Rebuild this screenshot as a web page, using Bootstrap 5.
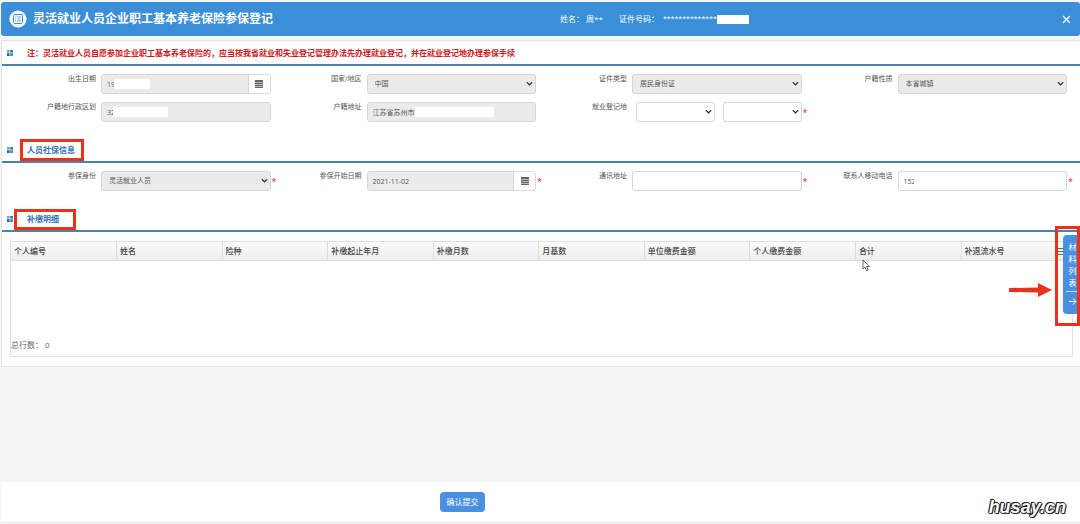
<!DOCTYPE html>
<html lang="zh-CN">
<head>
<meta charset="utf-8">
<meta name="viewport" content="width=device-width, initial-scale=1">
<title>灵活就业人员企业职工基本养老保险参保登记</title>
<link href="https://cdn.jsdelivr.net/npm/bootstrap@5.3.0/dist/css/bootstrap.min.css" rel="stylesheet">
<style>
body{background:#f5f5f5;font-family:"Open Sans","Noto Sans CJK SC",sans-serif;font-size:7px;line-height:10px;color:#555}
.page-shell{padding:2px 0 1px 1px}
.top-bar{background:#3a8fd8;height:34px;border-radius:3px;color:#fff;padding:0 9px 0 8px;font-size:8px;gap:6px}
.top-bar h1{font-size:12px;line-height:18px;font-weight:700}
.who{left:559px}
.stars{font-size:7px}
.redact{width:32px;height:9px;background:#fff}
.close-x{background:none;border:0;padding:0;line-height:0;color:#fff}
.panel{background:#fff;margin-top:4px;border:1px solid #e6e6e6;border-top-color:#f0dede;border-right:0;padding-bottom:9px}
.sec-title{height:25px;border-bottom:2px solid #4b81ae;padding-left:5px;gap:14px}
.sec-title h2{font-size:8px;line-height:12px;font-weight:700;color:#3272b8}
.sec-title .notice{color:#d01820}
.mark-box{border:3px solid #e8321a;pointer-events:none}
.mark-a{inset:-5px -9px -5px -7px}
.mark-b{inset:-4px -17px -5px -13px}
.fields{padding:8px 13px 0 3px;row-gap:8px}
.fields label{width:91px;text-align:right;flex:none;margin-right:5px}
.ctl{min-width:0}
.ctl .form-control,.ctl .form-select{height:20px;min-height:0;font-size:7px;line-height:10px;color:#555;border:1px solid #d6d6d6;border-radius:3px;padding:4px 5px;box-shadow:none;background-color:#fff}
.ctl .form-select{padding:4px 16px 4px 7px;background-image:url("data:image/svg+xml,%3Csvg xmlns='http://www.w3.org/2000/svg' viewBox='0 0 8 6'%3E%3Cpath d='M1 1l3 3 3-3' fill='none' stroke='%23333' stroke-width='1.5'/%3E%3C/svg%3E");background-size:7px 6px;background-position:right 2px center}
.ctl .locked{background-color:#ebebeb}
.ctl .input-group>.form-control{border-radius:3px 0 0 3px}
.cal-btn{width:23px;height:20px;padding:0;border:1px solid #ddd;background:#fff;border-radius:0 3px 3px 0;line-height:0}
.req{left:100%;top:6px;margin-left:1px;color:#e02030;font-size:9px}
.veil{background:#fff;height:10px;top:5px;z-index:6}
.grid-wrap{margin:9px 7px 0 8px;border:1px solid #e0e0e0;height:116px}
.grid-wrap table{table-layout:fixed;font-size:8px;line-height:12px;color:#444}
.grid-wrap th{height:18px;padding:2px 3px;font-weight:500;border-right:1px solid #ddd;border-bottom:1px solid #ddd;background:linear-gradient(#fafafa,#eee);text-align:left;white-space:nowrap;overflow:hidden}
.grid-wrap th:last-child{width:111px;border-right:0}
.menu-lines{float:right;margin:3px 4px 0 0}
.total{font-size:8px;line-height:12px;color:#666;padding-bottom:5px}
.side-wrap{right:0;top:226px;width:25px;height:100px}
.side-frame{inset:0;border:3px solid #e8321a;z-index:2;pointer-events:none}
.side-tab{right:0;top:9px;width:17px;padding:6px 1px 8px 3px;background:#4b8fe0;border:0;border-radius:4px 0 0 4px;color:#fff;font-size:8px;line-height:12px}
.side-tab .rule{border-top:1px solid #c8def8;margin:2px 0 5px}
.side-arrow{right:27px;top:282px}
.pointer{left:862px;top:259px}
.foot{background:#fff;height:41px;padding-right:156px;border-bottom:1px solid #e8e8e8}
.send-btn{width:45px;height:20px;border:0;border-radius:4px;background:#4b8fe0;color:#fff;font-size:8px;line-height:12px;padding:0}
.brand-mark{right:14px;bottom:7px;font:italic 700 18px/20px "Liberation Sans",sans-serif;color:#fff;text-shadow:1px 0 #222,-1px 0 #222,0 1px #222,0 -1px #222,1px 1px #222,-1px -1px #222}
</style>
</head>
<body>
<div class="page-shell position-relative min-vh-100 d-flex flex-column">
<header class="top-bar position-relative d-flex align-items-center">
<svg width="18" height="18" viewBox="0 0 18 18"><circle cx="9" cy="9" r="8.6" fill="#fff"/><rect x="4.5" y="4.500" width="9" height="9" rx="1" fill="none" stroke="#3a8fd8"/><path d="M6.2 7h1M8 7h4M6.2 9h1M8 9h4M6.2 11h1M8 11h4" stroke="#3a8fd8" stroke-width=".8"/></svg>
<h1 class="m-0">灵活就业人员企业职工基本养老保险参保登记</h1>
<div class="who position-absolute d-flex align-items-center">
<span class="me-3">姓名： 周**</span><span>证件号码：</span><span class="stars ms-1">**************</span><span class="redact"></span>
</div>
<button type="button" class="close-x ms-auto" aria-label="关闭"><svg width="9" height="9" viewBox="0 0 9 9"><path d="M1 1l7 7M8 1L1 8" stroke="currentColor" stroke-width="1.3"/></svg></button>
</header>

<svg width="0" height="0" class="position-absolute"><defs>
<symbol id="tiles" viewBox="0 0 6 6"><path d="M0 0h2.6v2.6H0z" fill="#6aa9c0"/><path d="M3.2 0H6v2.6H3.2z" fill="#2f78b8"/><path d="M0 3.2h2.6V6H0z" fill="#2465a8"/><path d="M3.2 3.2H6V6H3.2z" fill="#4b8fae"/></symbol>
<symbol id="cal" viewBox="0 0 8 8"><path d="M0 0h8v8H0z" fill="#666"/><path d="M0 2.500h8M0 4.500h8M0 6.500h8" stroke="#ccc" stroke-width=".8"/></symbol>
</defs></svg>

<main class="panel">
<section>
<div class="sec-title d-flex align-items-center"><svg width="6" height="6"><use href="#tiles"/></svg><h2 class="notice m-0">注：灵活就业人员自愿参加企业职工基本养老保险的，应当按我省就业和失业登记管理办法先办理就业登记，并在就业登记地办理参保手续</h2></div>
<div class="fields row g-0">
<div class="col-3 d-flex"><label for="birth">出生日期</label><div class="ctl position-relative flex-fill"><div class="input-group flex-nowrap"><input id="birth" class="form-control locked" value="19" readonly><button type="button" class="cal-btn" aria-label="选择日期"><svg width="8" height="8"><use href="#cal"/></svg></button></div><span class="veil position-absolute" style="left:13px;width:36px"></span></div></div>
<div class="col-3 d-flex"><label for="nation">国家/地区</label><div class="ctl flex-fill"><select id="nation" class="form-select locked"><option>中国</option></select></div></div>
<div class="col-3 d-flex"><label for="idtype">证件类型</label><div class="ctl flex-fill"><select id="idtype" class="form-select locked"><option>居民身份证</option></select></div></div>
<div class="col-3 d-flex"><label for="hukou">户籍性质</label><div class="ctl flex-fill"><select id="hukou" class="form-select locked"><option>本省城镇</option></select></div></div>
<div class="col-3 d-flex"><label for="area">户籍地行政区划</label><div class="ctl position-relative flex-fill"><input id="area" class="form-control locked" value="32" readonly><span class="veil position-absolute" style="left:12px;width:55px"></span></div></div>
<div class="col-3 d-flex"><label for="addr">户籍地址</label><div class="ctl position-relative flex-fill"><input id="addr" class="form-control locked" value="江苏省苏州市" readonly><span class="veil position-absolute" style="left:48px;width:79px"></span></div></div>
<div class="col-3 d-flex"><label for="reg">就业登记地</label><div class="ctl position-relative flex-fill d-flex gap-2 ps-1"><select id="reg" class="form-select"><option></option></select><select class="form-select" aria-label="就业登记地区县"><option></option></select><span class="req position-absolute">*</span></div></div>
</div>
</section>

<section class="mt-3">
<div class="sec-title d-flex align-items-center"><svg width="6" height="6"><use href="#tiles"/></svg><h2 class="m-0 position-relative">人员社保信息<span class="mark-box mark-a position-absolute"></span></h2></div>
<div class="fields row g-0">
<div class="col-3 d-flex"><label for="kind">参保身份</label><div class="ctl position-relative flex-fill"><select id="kind" class="form-select locked"><option>灵活就业人员</option></select><span class="req position-absolute">*</span></div></div>
<div class="col-3 d-flex"><label for="start">参保开始日期</label><div class="ctl position-relative flex-fill"><div class="input-group flex-nowrap"><input id="start" class="form-control locked" value="2021-11-02" readonly><button type="button" class="cal-btn" aria-label="选择日期"><svg width="8" height="8"><use href="#cal"/></svg></button></div><span class="req position-absolute">*</span></div></div>
<div class="col-3 d-flex"><label for="mail">通讯地址</label><div class="ctl position-relative flex-fill"><input id="mail" class="form-control"><span class="req position-absolute">*</span></div></div>
<div class="col-3 d-flex"><label for="tel">联系人移动电话</label><div class="ctl position-relative flex-fill"><input id="tel" class="form-control" value="152"><span class="veil position-absolute" style="left:16px;width:40px"></span><span class="req position-absolute">*</span></div></div>
</div>
</section>

<section class="mt-3">
<div class="sec-title d-flex align-items-center"><svg width="6" height="6"><use href="#tiles"/></svg><h2 class="m-0 position-relative">补缴明细<span class="mark-box mark-b position-absolute"></span></h2></div>
<div class="grid-wrap d-flex flex-column">
<table class="w-100"><thead><tr><th>个人编号</th><th>姓名</th><th>险种</th><th>补缴起止年月</th><th>补缴月数</th><th>月基数</th><th>单位缴费金额</th><th>个人缴费金额</th><th>合计</th><th>补退流水号<svg class="menu-lines" width="7" height="7" viewBox="0 0 7 7"><path d="M0 .5h7M0 3.500h7M0 6.500h7" stroke="#666"/></svg></th></tr></thead></table>
<div class="total mt-auto">总行数： 0</div>
</div>
</section>
</main>

<footer class="foot mt-auto d-flex justify-content-center align-items-center"><button type="submit" class="send-btn">确认提交</button></footer>

<div class="side-wrap position-absolute"><button type="button" class="side-tab position-absolute">材<br>料<br>列<br>表<div class="rule"></div><svg class="d-block mx-auto" width="9" height="9" viewBox="0 0 9 9"><path d="M1 4.5h7M5 1.5l3 3-3 3" fill="none" stroke="#fff"/></svg></button><span class="side-frame position-absolute"></span></div>
<svg class="side-arrow position-absolute" width="44" height="16" viewBox="0 0 44 16"><path d="M0 6l29-.5V1l14 7-14 7v-4.500L0 10z" fill="#e8321a"/></svg>
<svg class="pointer position-absolute" width="9" height="13" viewBox="0 0 9 13"><path d="M1 1v9l2-2 1.600 3.800 1.600-.7L4.600 7.500h3z" fill="#fff" stroke="#444" stroke-width=".8"/></svg>
<div class="brand-mark position-absolute">husay.cn</div>
</div>
<script src="https://cdn.jsdelivr.net/npm/bootstrap@5.3.0/dist/js/bootstrap.bundle.min.js"></script>
</body>
</html>
